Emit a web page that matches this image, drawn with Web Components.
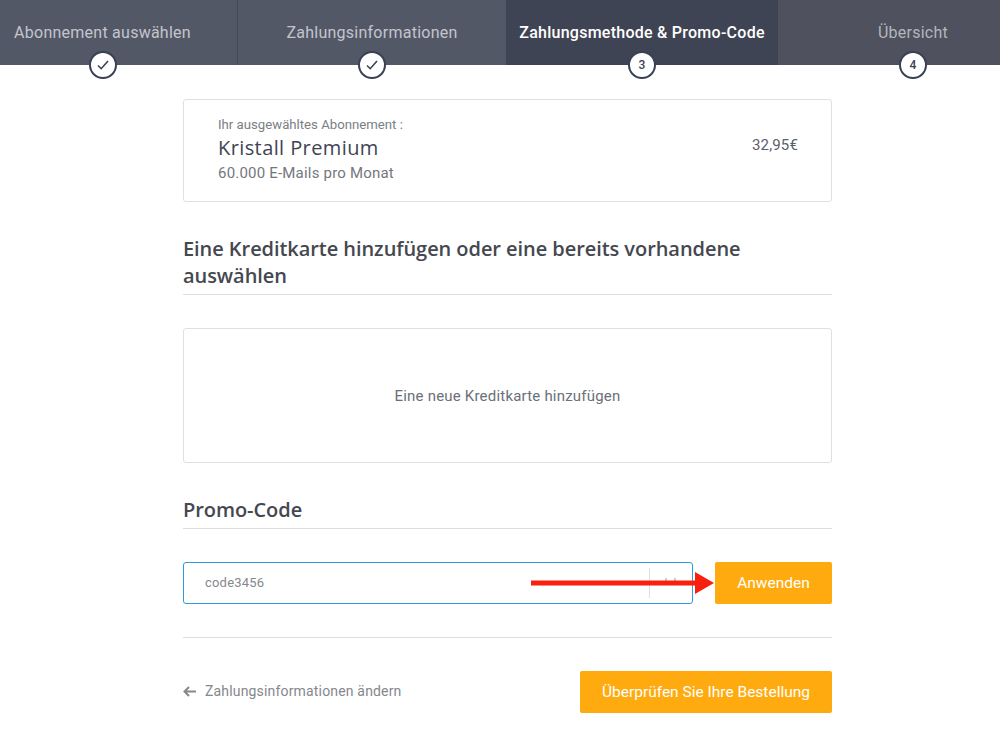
<!DOCTYPE html>
<html lang="de">
<head>
<meta charset="utf-8">
<title>Zahlungsmethode</title>
<style>
  body { margin: 0; background: #fff; font-family: Roboto, sans-serif; }
</style>
</head>
<body>
<template id="step-tpl">
  <style>
    :host {
      display: block;
      box-sizing: border-box;
      height: 65px;
      padding-top: 23px;
      background: #535867;
      color: #c3c5cc;
      font: 16px/20px Roboto, sans-serif;
      letter-spacing: .25px;
      white-space: nowrap;
    }
    :host([active]) { background: #3f4454; color: #fff; font-weight: 500; letter-spacing: .26px; }
    :host([todo]) { background: #4f515e; color: #b4b6bd; }
    .wrap { position: relative; text-align: center; }
    .dot {
      position: absolute;
      left: 50%;
      top: 28px;
      margin-left: -14px;
      box-sizing: border-box;
      width: 28px;
      height: 28px;
      border: 2px solid #3a4055;
      border-radius: 50%;
      background: #fff;
      color: #3a4055;
      font: 500 12px/24px Roboto, sans-serif;
      letter-spacing: 0;
      text-align: center;
    }
    svg { display: block; margin: 6px auto 0; }
  </style>
  <div class="wrap"><slot></slot><span class="dot"></span></div>
</template>

<template id="steps-tpl">
  <style>
    :host {
      display: grid;
      grid-template-columns: 237px 269px 272px 222px;
      height: 65px;
    }
    ::slotted(check-step:first-child) { padding-right: 32px; }
    ::slotted(check-step:last-child) { padding-left: 48px; }
    ::slotted(check-step:nth-child(2)) { border-left: 1px solid #454958; }
  </style>
  <slot></slot>
</template>

<template id="card-tpl">
  <style>
    :host {
      display: block;
      box-sizing: border-box;
      border: 1px solid #dfe0e2;
      border-radius: 3px;
      background: #fff;
    }
  </style>
  <slot></slot>
</template>

<template id="plan-tpl">
  <style>
    :host { display: block; }
    .in {
      display: flex;
      justify-content: space-between;
      box-sizing: border-box;
      height: 101px;
      padding: 16px 33px 0 34px;
    }
    .over { font: 13.2px/18px Roboto, sans-serif; color: #7b7e84; }
    .name { font: 20px/28px "Open Sans", sans-serif; color: #3f4454; letter-spacing: .4px; }
    .sub { font: 15px/22px Roboto, sans-serif; color: #74777e; letter-spacing: .2px; }
    .price { font: 15px/20px Roboto, sans-serif; color: #5a5e6b; margin-top: 19px; letter-spacing: .15px; }
  </style>
  <pay-card>
    <div class="in">
      <div>
        <div class="over">Ihr ausgewähltes Abonnement :</div>
        <div class="name">Kristall Premium</div>
        <div class="sub">60.000 E-Mails pro Monat</div>
      </div>
      <div class="price">32,95€</div>
    </div>
  </pay-card>
</template>

<template id="title-tpl">
  <style>
    :host {
      display: block;
      padding-bottom: 5px;
      border-bottom: 1px solid #dcdde0;
      font: 600 20px/27px "Open Sans", sans-serif;
      color: #45484f;
      letter-spacing: -.06px;
    }
  </style>
  <slot></slot>
</template>

<template id="btn-tpl">
  <style>
    :host {
      display: flex;
      align-items: center;
      justify-content: center;
      box-sizing: border-box;
      height: 42px;
      border-radius: 2px;
      background: #ffab0f;
      color: #fff;
      font: 15.5px Roboto, sans-serif;
      white-space: nowrap;
    }
  </style>
  <slot></slot>
</template>

<template id="promo-tpl">
  <style>
    :host {
      display: flex;
      justify-content: space-between;
      position: relative;
    }
    .field {
      display: flex;
      align-items: center;
      box-sizing: border-box;
      width: 510px;
      height: 42px;
      padding-left: 21px;
      border: 1px solid #2d9bdf;
      border-radius: 3px;
      font: 13px Roboto, sans-serif;
      color: #85888d;
      letter-spacing: .2px;
    }
    .field span:first-child { margin-bottom: 2px; }
    .sep { width: 1px; height: 30px; margin-left: auto; margin-right: 42px; background: #dedfe1; }
    pay-button { width: 117px; }
    .arrow { position: absolute; left: 348px; top: 10px; }
    .tick { position: absolute; left: 482px; top: 16px; }
  </style>
  <div class="field"><span>code3456</span><span class="sep"></span></div>
  <svg class="tick" width="12" height="4" viewBox="0 0 12 4"><path d="M1 0v3M10 0v3" stroke="#a6a7aa" stroke-width="1.2"/></svg>
  <pay-button>Anwenden</pay-button>
  <svg class="arrow" width="184" height="22" viewBox="0 0 184 22"><path d="M0 8.5h166v5H0z" fill="#f8200c"/><path d="M164 0l19 11-19 11z" fill="#f8200c"/></svg>
</template>

<template id="page-tpl">
  <style>
    :host {
      display: block;
      box-sizing: border-box;
      width: 649px;
      margin: 34px auto 0 183px;
    }
    pay-title.first { margin-top: 33px; }
    .new {
      display: flex;
      align-items: center;
      justify-content: center;
      height: 133px;
      font: 15px Roboto, sans-serif;
      color: #6b6f78;
      letter-spacing: .2px;
    }
    pay-card.add { margin-top: 33px; }
    pay-title.promo { margin-top: 33px; }
    promo-row { margin-top: 33px; }
    hr { border: 0; border-top: 1px solid #dcdde0; margin: 33px 0 0; }
    .foot {
      display: flex;
      align-items: center;
      justify-content: space-between;
      margin-top: 33px;
    }
    .back {
      display: flex;
      align-items: center;
      gap: 9px;
      margin-bottom: 2px;
      font: 14px Roboto, sans-serif;
      color: #85878c;
      letter-spacing: .17px;
    }
    .foot pay-button { width: 252px; }
  </style>
  <plan-box></plan-box>
  <pay-title class="first">Eine Kreditkarte hinzufügen oder eine bereits vorhandene auswählen</pay-title>
  <pay-card class="add"><div class="new">Eine neue Kreditkarte hinzufügen</div></pay-card>
  <pay-title class="promo">Promo-Code</pay-title>
  <promo-row></promo-row>
  <hr>
  <div class="foot">
    <span class="back">
      <svg width="13" height="11" viewBox="0 0 13 11"><path d="M13 5.5H2M6 1L1.5 5.5 6 10" fill="none" stroke="#85878c" stroke-width="2"/></svg>
      Zahlungsinformationen ändern
    </span>
    <pay-button>Überprüfen Sie Ihre Bestellung</pay-button>
  </div>
</template>

<check-steps>
  <check-step done>Abonnement auswählen</check-step>
  <check-step done>Zahlungsinformationen</check-step>
  <check-step active num="3">Zahlungsmethode &amp; Promo-Code</check-step>
  <check-step todo num="4">Übersicht</check-step>
</check-steps>
<pay-page></pay-page>

<script>
  const CHECK = '<svg width="14" height="12" viewBox="0 0 14 12"><path d="M2 6.5l3.2 3.2L12 2" fill="none" stroke="#3a4055" stroke-width="1.6"/></svg>';

  // plain element: just clones its template into an open shadow root
  function plain(tag, tplId) {
    customElements.define(tag, class extends HTMLElement {
      connectedCallback() {
        if (this.shadowRoot) return;
        this.attachShadow({ mode: 'open' });
        this.shadowRoot.appendChild(document.getElementById(tplId).content.cloneNode(true));
      }
    });
  }

  class CheckStep extends HTMLElement {
    connectedCallback() {
      this.root = this.attachShadow({ mode: 'open' });
      this.root.appendChild(document.getElementById('step-tpl').content.cloneNode(true));
      const dot = this.root.querySelector('.dot');
      if (this.hasAttribute('done')) dot.innerHTML = CHECK;
      else dot.textContent = this.getAttribute('num');
    }
  }
  customElements.define('check-step', CheckStep);

  plain('check-steps', 'steps-tpl');
  plain('pay-card', 'card-tpl');
  plain('plan-box', 'plan-tpl');
  plain('pay-title', 'title-tpl');
  plain('pay-button', 'btn-tpl');
  plain('promo-row', 'promo-tpl');
  plain('pay-page', 'page-tpl');
</script>
</body>
</html>
